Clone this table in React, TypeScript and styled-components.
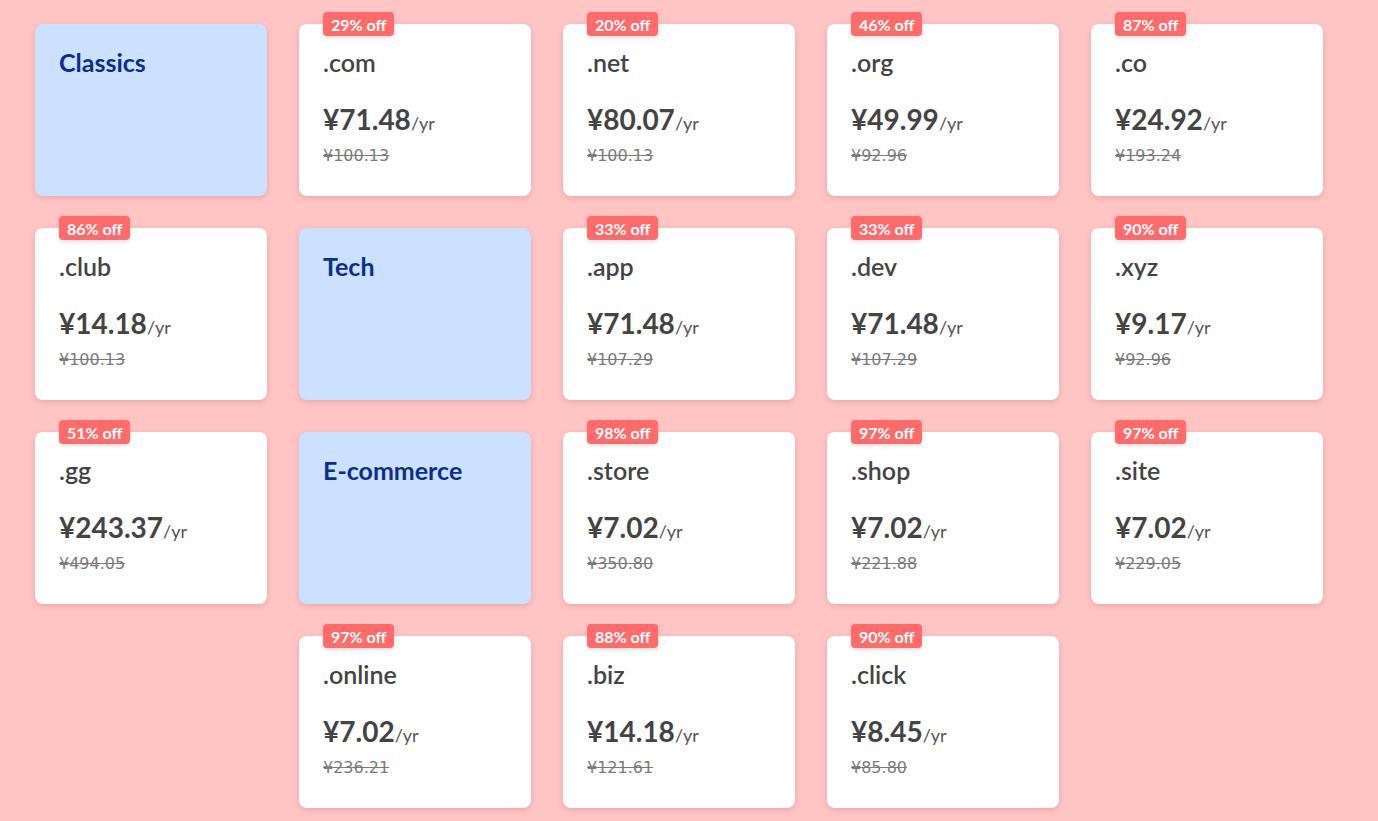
import React from "react";
import styled, { createGlobalStyle } from "styled-components";

const GlobalStyle = createGlobalStyle`
  html, body {
    margin: 0;
    padding: 0;
    background: #ffc5c5;
    font-family: Lato, "Noto Sans", sans-serif;
  }
`;

const Page = styled.main`
  padding: 24px 0 24px 35px;
`;

const Grid = styled.div`
  display: grid;
  grid-template-columns: repeat(5, 232px);
  grid-auto-rows: 172px;
  column-gap: 32px;
  row-gap: 32px;
`;

const Card = styled.div<{ $start?: number }>`
  position: relative;
  box-sizing: border-box;
  padding: 23px 24px;
  background: #ffffff;
  border-radius: 8px;
  box-shadow: 0 2px 6px rgba(120, 40, 40, 0.18);
  grid-column-start: ${(p) => p.$start ?? "auto"};
  display: flex;
  flex-direction: column;
`;

const CategoryCard = styled(Card)`
  background: #cce0ff;
`;

const CategoryTitle = styled.h2`
  margin: 0;
  font-size: 25px;
  font-weight: 700;
  line-height: 1.2;
  color: #0b2e8c;
`;

const Badge = styled.span`
  position: absolute;
  top: -12px;
  left: 24px;
  height: 24px;
  padding: 0 8px;
  display: flex;
  align-items: center;
  background: #ff6b6b;
  color: #ffffff;
  font-size: 16px;
  font-weight: 700;
  border-radius: 4px;
  box-shadow: 0 2px 4px rgba(120, 40, 40, 0.15);
`;

const Domain = styled.div`
  font-size: 25px;
  font-weight: 600;
  line-height: 1.2;
  color: #444444;
`;

const PriceRow = styled.div`
  margin-top: 26px;
  display: flex;
  align-items: baseline;
  line-height: 1.2;
  color: #444444;
`;

const Price = styled.span`
  font-size: 28px;
  font-weight: 700;
`;

const Per = styled.span`
  font-size: 18px;
  font-weight: 400;
  color: #555555;
`;

const OldPrice = styled.s`
  margin-top: 9px;
  font-family: "DejaVu Sans", Lato, sans-serif;
  font-size: 16px;
  line-height: 20px;
  color: #7a7a7a;
`;

type Item =
  | { kind: "cat"; title: string }
  | { kind: "dom"; name: string; off: number; price: string; old: string; start?: number };

const items: Item[] = [
  { kind: "cat", title: "Classics" },
  { kind: "dom", name: ".com", off: 29, price: "71.48", old: "100.13" },
  { kind: "dom", name: ".net", off: 20, price: "80.07", old: "100.13" },
  { kind: "dom", name: ".org", off: 46, price: "49.99", old: "92.96" },
  { kind: "dom", name: ".co", off: 87, price: "24.92", old: "193.24" },
  { kind: "dom", name: ".club", off: 86, price: "14.18", old: "100.13" },
  { kind: "cat", title: "Tech" },
  { kind: "dom", name: ".app", off: 33, price: "71.48", old: "107.29" },
  { kind: "dom", name: ".dev", off: 33, price: "71.48", old: "107.29" },
  { kind: "dom", name: ".xyz", off: 90, price: "9.17", old: "92.96" },
  { kind: "dom", name: ".gg", off: 51, price: "243.37", old: "494.05" },
  { kind: "cat", title: "E-commerce" },
  { kind: "dom", name: ".store", off: 98, price: "7.02", old: "350.80" },
  { kind: "dom", name: ".shop", off: 97, price: "7.02", old: "221.88" },
  { kind: "dom", name: ".site", off: 97, price: "7.02", old: "229.05" },
  { kind: "dom", name: ".online", off: 97, price: "7.02", old: "236.21", start: 2 },
  { kind: "dom", name: ".biz", off: 88, price: "14.18", old: "121.61" },
  { kind: "dom", name: ".click", off: 90, price: "8.45", old: "85.80" },
];

export default function App() {
  return (
    <>
      <GlobalStyle />
      <Page>
        <Grid>
          {items.map((it, i) =>
            it.kind === "cat" ? (
              <CategoryCard key={i}>
                <CategoryTitle>{it.title}</CategoryTitle>
              </CategoryCard>
            ) : (
              <Card key={i} $start={it.start}>
                <Badge>{it.off}% off</Badge>
                <Domain>{it.name}</Domain>
                <PriceRow>
                  <Price>¥{it.price}</Price>
                  <Per>/yr</Per>
                </PriceRow>
                <OldPrice>¥{it.old}</OldPrice>
              </Card>
            )
          )}
        </Grid>
      </Page>
    </>
  );
}
